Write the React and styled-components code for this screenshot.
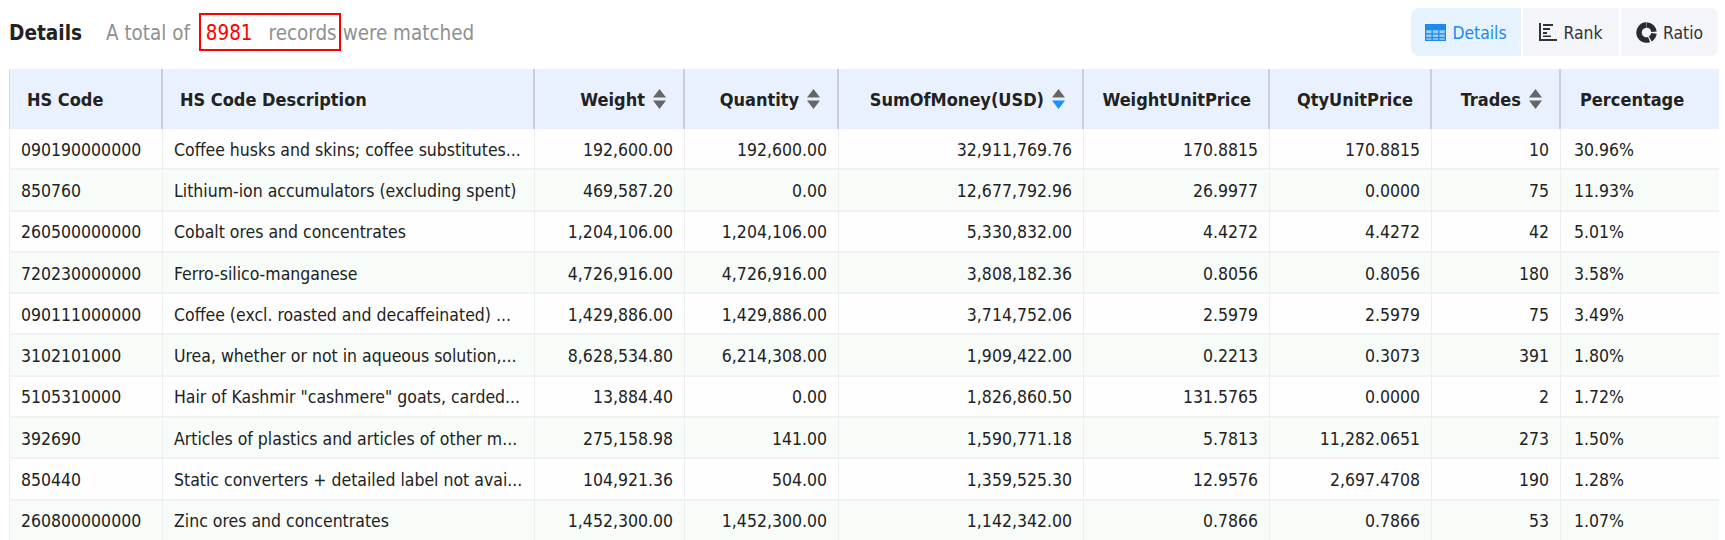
import React from 'react';
import styled, { createGlobalStyle } from 'styled-components';

const GlobalStyle = createGlobalStyle`
  html, body {
    margin: 0;
    padding: 0;
    height: 540px;
    overflow: hidden;
    background: #fff;
    font-family: "DejaVu Sans Condensed", "DejaVu Sans", sans-serif;
    font-stretch: condensed;
  }
`;

const Page = styled.div`
  padding: 8px 6px 0 9px;
`;

const TopBar = styled.div`
  display: flex;
  justify-content: space-between;
  align-items: center;
  height: 48px;
  margin-bottom: 13px;
  margin-right: 1px;
`;

const Summary = styled.div`
  display: flex;
  align-items: center;
  padding-top: 2px;
  color: #909090;
  font-size: 20.4px;
`;

const Title = styled.h2`
  margin: 0 24px 0 0;
  font-size: 20.6px;
  font-weight: 700;
  color: #222;
`;

const Highlight = styled.span`
  display: flex;
  align-items: center;
  box-sizing: border-box;
  height: 38px;
  margin: 0 2px 2px 9px;
  padding: 2px 2px 0 5px;
  border: 2px solid #f00;
`;

const Count = styled.span`
  color: #f00;
  margin-right: 16px;
`;

const Tabs = styled.div`
  display: flex;
  gap: 2px;
`;

const Tab = styled.div`
  display: flex;
  align-items: center;
  justify-content: center;
  gap: 6px;
  box-sizing: border-box;
  width: ${p => p.$width}px;
  height: 48px;
  font-size: 17.4px;
  color: ${p => (p.$active ? '#1c8af0' : '#333')};
  background: ${p => (p.$active ? '#e6f2fe' : '#f3f5fb')};

  &:first-child {
    border-radius: 8px 0 0 8px;
  }

  &:last-child {
    border-radius: 0 8px 8px 0;
  }
`;

const TabLabel = styled.span`
  padding-top: 2px;
`;

const Table = styled.table`
  width: 1710px;
  table-layout: fixed;
  border-collapse: separate;
  border-spacing: 0;
  font-size: 17.5px;
  color: #222;
`;

const HeadCell = styled.th`
  box-sizing: border-box;
  height: 60px;
  padding: ${p => (p.$right ? '0 17px 0 0' : `0 0 0 ${p.$pad || 17}px`)};
  background: #eaf1fe;
  border-right: 2px solid #c9ced9;
  font-size: 18px;
  font-weight: 700;
  text-align: ${p => (p.$right ? 'right' : 'left')};
  white-space: nowrap;

  &:first-child {
    border-left: 1px solid #d5d8de;
  }

  &:last-child {
    border-right: 0;
  }
`;

const HeadInner = styled.span`
  display: inline-flex;
  align-items: center;
  gap: 8px;
`;

const Row = styled.tr`
  background: ${p => (p.$even ? '#f7fcf9' : '#fefefe')};
`;

const Cell = styled.td`
  box-sizing: border-box;
  height: 41.3px;
  padding: 2px 11px 0 11px;
  border-right: 1px solid #eceef0;
  border-bottom: 2px solid #eff1f3;
  text-align: ${p => (p.$right ? 'right' : 'left')};
  white-space: nowrap;
  overflow: hidden;
  text-overflow: ellipsis;

  &:first-child {
    border-left: 1px solid #eceef0;
  }

  &:last-child {
    padding-left: 13px;
    border-right: 0;
  }
`;

const TableIcon = () => (
  <svg width="21" height="17" viewBox="0 0 21 17" fill="#1c8af0">
    <path d="M0 0h21v5H0z" />
    <path d="M0 5h21v1.200H0zM0 9.200h21v1.200H0zM0 13h21v1.200H0zM0 15.800h21V17H0z" />
    <path d="M0 5h1.300v12H0zM6.500 5h1.300v12H6.500zM13.200 5h1.300v12h-1.300zM19.700 5H21v12h-1.300z" />
    <path d="M1 6h19v11H1z" opacity="0.35" />
  </svg>
);

const RankIcon = () => (
  <svg width="18" height="18" viewBox="0 0 18 18" fill="#333">
    <path d="M0 0h2v16h16v2H0z" />
    <path d="M4 1h10v2H4zM4 5h7v2H4zM4 9h4v2H4zM4 12.500h8v1.500H4z" />
  </svg>
);

const RatioIcon = () => (
  <svg width="21" height="21" viewBox="0 0 21 21" fill="none" stroke="#2b2b2b" strokeWidth="5.500">
    <path d="M10.500 3a7.500 7.500 0 0 1 7.470 6.850" />
    <path d="M17.940 11.410a7.500 7.500 0 0 1-3.690 5.590" />
    <path d="M13.070 17.550A7.500 7.500 0 1 1 10.240 3" />
  </svg>
);

const SortIcon = ({ active }) => (
  <svg width="13" height="20" viewBox="0 0 13 20">
    <path d="M6.500 0L13 8.500H0z" fill="#666" />
    <path d="M6.500 20L0 11.500h13z" fill={active ? '#1890ff' : '#666'} />
  </svg>
);

const columns = [
  { label: 'HS Code', width: 154 },
  { label: 'HS Code Description', width: 372 },
  { label: 'Weight', width: 150, right: true, sort: true },
  { label: 'Quantity', width: 154, right: true, sort: true },
  { label: 'SumOfMoney(USD)', width: 245, right: true, sort: true, active: true },
  { label: 'WeightUnitPrice', width: 186, right: true },
  { label: 'QtyUnitPrice', width: 162, right: true },
  { label: 'Trades', width: 129, right: true, sort: true },
  { label: 'Percentage', width: 158, pad: 19 },
];

const rows = [
  ['090190000000', 'Coffee husks and skins; coffee substitutes...', '192,600.00', '192,600.00', '32,911,769.76', '170.8815', '170.8815', '10', '30.96%'],
  ['850760', 'Lithium-ion accumulators (excluding spent)', '469,587.20', '0.00', '12,677,792.96', '26.9977', '0.0000', '75', '11.93%'],
  ['260500000000', 'Cobalt ores and concentrates', '1,204,106.00', '1,204,106.00', '5,330,832.00', '4.4272', '4.4272', '42', '5.01%'],
  ['720230000000', 'Ferro-silico-manganese', '4,726,916.00', '4,726,916.00', '3,808,182.36', '0.8056', '0.8056', '180', '3.58%'],
  ['090111000000', 'Coffee (excl. roasted and decaffeinated) ...', '1,429,886.00', '1,429,886.00', '3,714,752.06', '2.5979', '2.5979', '75', '3.49%'],
  ['3102101000', 'Urea, whether or not in aqueous solution,...', '8,628,534.80', '6,214,308.00', '1,909,422.00', '0.2213', '0.3073', '391', '1.80%'],
  ['5105310000', 'Hair of Kashmir "cashmere" goats, carded...', '13,884.40', '0.00', '1,826,860.50', '131.5765', '0.0000', '2', '1.72%'],
  ['392690', 'Articles of plastics and articles of other m...', '275,158.98', '141.00', '1,590,771.18', '5.7813', '11,282.0651', '273', '1.50%'],
  ['850440', 'Static converters + detailed label not avai...', '104,921.36', '504.00', '1,359,525.30', '12.9576', '2,697.4708', '190', '1.28%'],
  ['260800000000', 'Zinc ores and concentrates', '1,452,300.00', '1,452,300.00', '1,142,342.00', '0.7866', '0.7866', '53', '1.07%'],
];

const App = () => (
  <Page>
    <GlobalStyle />
    <TopBar>
      <Summary>
        <Title>Details</Title>
        A total of
        <Highlight>
          <Count>8981</Count>
          records
        </Highlight>
        were matched
      </Summary>
      <Tabs>
        <Tab $active $width={110}>
          <TableIcon />
          <TabLabel>Details</TabLabel>
        </Tab>
        <Tab $width={96}>
          <RankIcon />
          <TabLabel>Rank</TabLabel>
        </Tab>
        <Tab $width={97}>
          <RatioIcon />
          <TabLabel>Ratio</TabLabel>
        </Tab>
      </Tabs>
    </TopBar>
    <Table>
      <colgroup>
        {columns.map(c => (
          <col key={c.label} width={c.width} />
        ))}
      </colgroup>
      <thead>
        <tr>
          {columns.map(c => (
            <HeadCell key={c.label} $right={c.right} $pad={c.pad}>
              <HeadInner>
                {c.label}
                {c.sort && <SortIcon active={c.active} />}
              </HeadInner>
            </HeadCell>
          ))}
        </tr>
      </thead>
      <tbody>
        {rows.map((row, i) => (
          <Row key={row[0]} $even={i % 2 === 1}>
            {row.map((value, j) => (
              <Cell key={j} $right={columns[j].right}>
                {value}
              </Cell>
            ))}
          </Row>
        ))}
      </tbody>
    </Table>
  </Page>
);

export default App;
